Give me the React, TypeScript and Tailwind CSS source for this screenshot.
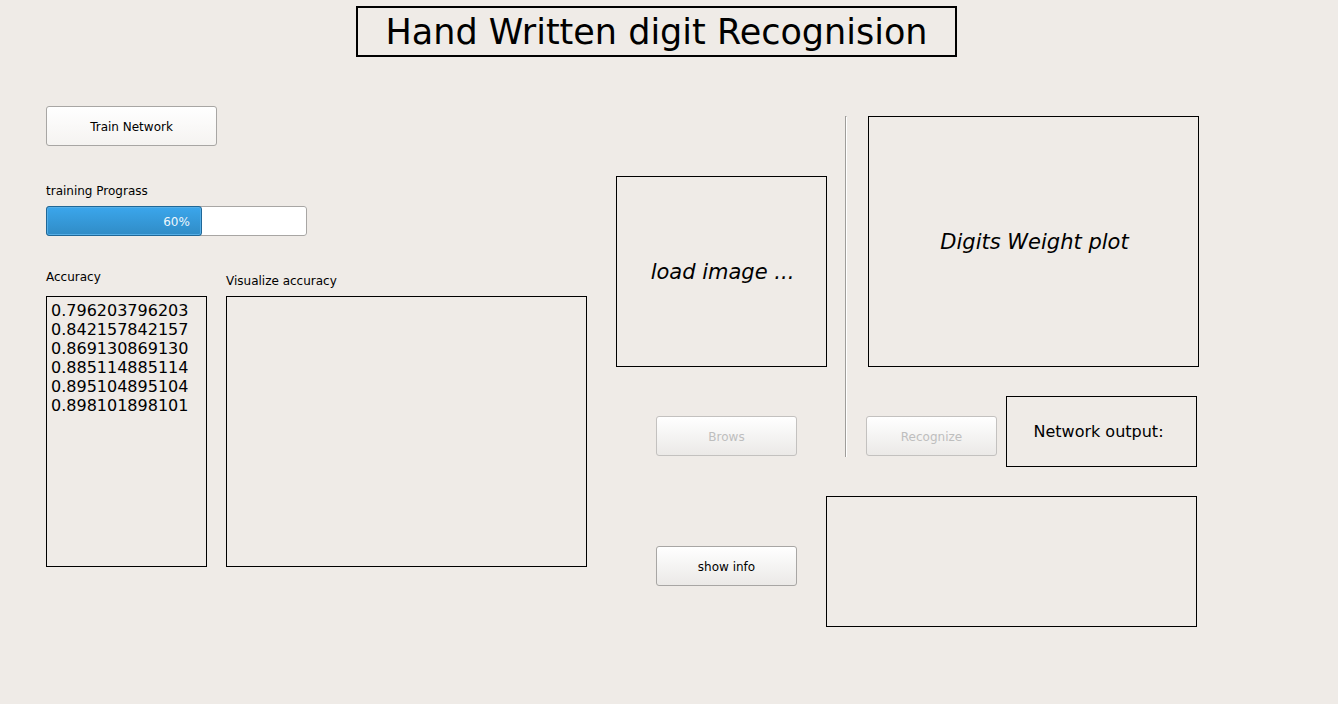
import type { ButtonHTMLAttributes } from "react";

const accuracies = [
  "0.796203796203",
  "0.842157842157",
  "0.869130869130",
  "0.885114885114",
  "0.895104895104",
  "0.898101898101",
];

function PushButton({ className = "", ...props }: ButtonHTMLAttributes<HTMLButtonElement>) {
  return (
    <button
      type="button"
      className={`h-10 rounded-[3px] border border-[#a8a6a4] bg-linear-to-b from-white pt-px text-black disabled:border-[#c3c1bf] disabled:text-[#bebebe] ${className}`}
      {...props}
    />
  );
}

function TrainingProgress({ value }: { value: number }) {
  return (
    <div
      role="progressbar"
      aria-labelledby="progress-label"
      aria-valuemin={0}
      aria-valuemax={100}
      aria-valuenow={value}
      className="grid h-[30px] w-[261px] rounded-[3px] bg-white"
    >
      <div className="col-start-1 row-start-1 rounded-[3px] border border-[#a8a6a4]" />
      <div
        className="col-start-1 row-start-1 rounded-[3px] border border-[#1f6797] bg-linear-to-b from-[#3ba6ec] to-[#308cc6] inset-ring inset-ring-[#55aee6]"
        style={{ width: `round(down, ${value}%, 1px)` }}
      />
      <span className="col-start-1 row-start-1 self-center justify-self-center pt-px text-[#eff7fc]">
        {value}%
      </span>
    </div>
  );
}

export default function App() {
  return (
    <div className="min-h-screen bg-[#efebe7] pb-10 font-['DejaVu_Sans',sans-serif] text-xs text-black">
      <header className="flex justify-center pt-1.5 pr-[25px]">
        <h1 className="flex h-[51px] w-[601px] items-center justify-center border-2 border-black pt-0.5 text-[35px] whitespace-nowrap">
          Hand Written digit Recognision
        </h1>
      </header>

      <main className="grid grid-cols-[541fr_583fr] gap-x-[29px] pt-[49px] pr-[139px] pl-[46px]">
        <section className="flex flex-col items-start">
          <PushButton className="w-[171px] to-[#f5f3f1]">Train Network</PushButton>
          <p id="progress-label" className="mt-[37px] mb-[7px]">
            training Prograss
          </p>
          <TrainingProgress value={60} />
          <div className="mt-[33px] grid w-full grid-cols-[161fr_361fr] gap-x-[19px]">
            <div className="flex flex-col">
              <h2 className="mb-[11px]">Accuracy</h2>
              <ul className="h-[271px] border border-black px-1 py-1 text-base/[19px]">
                {accuracies.map((accuracy) => (
                  <li key={accuracy}>{accuracy}</li>
                ))}
              </ul>
            </div>
            <div className="flex flex-col pt-1">
              <h2 className="mb-[7px]">Visualize accuracy</h2>
              <div className="h-[271px] border border-black" />
            </div>
          </div>
        </section>

        <section className="flex flex-col pt-2.5">
          <div className="grid grid-cols-[211fr_3px_333fr] gap-x-[18px]">
            <div className="flex flex-col items-start pt-[60px]">
              <div className="flex h-[191px] w-full items-center justify-center border border-black pl-0.5 text-[21px] italic">
                load image ...
              </div>
              <PushButton disabled className="mt-[49px] ml-10 w-[141px] to-[#ebe9e7]">
                Brows
              </PushButton>
            </div>
            <div className="h-[341px] w-0.5 border-t border-r border-l border-t-[#9f9d9a] border-r-white border-l-[#9f9d9a]" />
            <div className="flex flex-col">
              <div className="ml-0.5 flex h-[251px] items-center justify-center border border-black pl-0.5 text-[21px] italic">
                Digits Weight plot
              </div>
              <div className="mt-[29px] flex items-start gap-[9px] pr-0.5">
                <PushButton disabled className="mt-5 w-[131px] to-[#ebe9e7]">
                  Recognize
                </PushButton>
                <div className="flex h-[71px] flex-1 items-center justify-center border border-black pr-1.5 text-base whitespace-nowrap">
                  Network output:
                </div>
              </div>
            </div>
          </div>
          <div className="mt-[29px] flex items-start gap-[29px] pr-0.5 pl-10">
            <PushButton className="mt-[50px] w-[141px] to-[#ebe9e7]">show info</PushButton>
            <div className="h-[131px] flex-1 border border-black" />
          </div>
        </section>
      </main>
    </div>
  );
}
